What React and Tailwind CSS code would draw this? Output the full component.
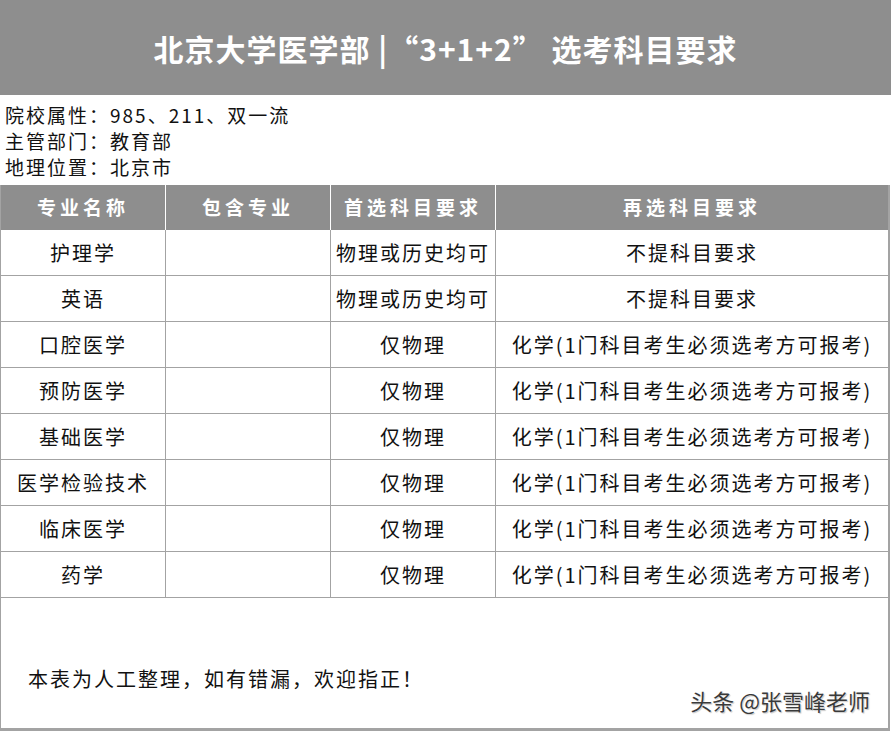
const rows = [
  ['护理学', '', '物理或历史均可', '不提科目要求'],
  ['英语', '', '物理或历史均可', '不提科目要求'],
  ['口腔医学', '', '仅物理', '化学(1门科目考生必须选考方可报考)'],
  ['预防医学', '', '仅物理', '化学(1门科目考生必须选考方可报考)'],
  ['基础医学', '', '仅物理', '化学(1门科目考生必须选考方可报考)'],
  ['医学检验技术', '', '仅物理', '化学(1门科目考生必须选考方可报考)'],
  ['临床医学', '', '仅物理', '化学(1门科目考生必须选考方可报考)'],
  ['药学', '', '仅物理', '化学(1门科目考生必须选考方可报考)'],
]

const heads = ['专业名称', '包含专业', '首选科目要求', '再选科目要求']

export default function App() {
  return (
    <div
      className="w-[891px] h-[731px] bg-white text-[#111] overflow-hidden flex flex-col"
      style={{ fontFamily: '"Noto Sans CJK SC", "Noto Sans", sans-serif' }}
    >
      {/* Title bar */}
      <div className="h-[95px] shrink-0 bg-[#8e8e8e] flex items-center justify-center">
        <h1 className="text-white text-[30px] font-bold tracking-[1px] leading-none whitespace-pre">
          北京大学医学部 |“3+1+2” 选考科目要求
        </h1>
      </div>

      {/* Info */}
      <div className="pt-[7px] pl-[5px] text-[19px] leading-[26px] tracking-[2px]">
        <p>院校属性：985、211、双一流</p>
        <p>主管部门：教育部</p>
        <p>地理位置：北京市</p>
      </div>

      {/* Table + footer */}
      <div className="mt-[5px] flex-1 flex flex-col border-r-2 border-b-[3px] border-[#a3a3a3] mr-[1px]">
        <div className="grid grid-cols-[165px_165px_165px_1fr] border-l border-[#a3a3a3]">
          {heads.map((h, i) => (
            <div
              key={h}
              className={`h-[45px] bg-[#8e8e8e] text-white font-bold text-[19px] tracking-[4px] flex items-center justify-center ${i < 3 ? 'border-r border-white' : ''}`}
            >
              {h}
            </div>
          ))}
          {rows.map((r, ri) =>
            r.map((c, ci) => (
              <div
                key={ri + '-' + ci}
                className={`h-[46px] text-[20px] tracking-[2px] flex items-center justify-center border-b border-[#a3a3a3] ${ci < 3 ? 'border-r' : ''}`}
              >
                {c}
              </div>
            ))
          )}
        </div>

        <div className="flex-1 relative border-l border-[#a3a3a3]">
          <p className="absolute left-[27px] top-[66px] text-[20px] tracking-[2px]">
            本表为人工整理，如有错漏，欢迎指正！
          </p>
          <p className="absolute right-[18px] top-[86px] text-[22px] text-[#3a3a3a] [text-shadow:0_0_2px_#fff,1px_1px_1px_#bbb]">
            头条 @张雪峰老师
          </p>
        </div>
      </div>
    </div>
  )
}
